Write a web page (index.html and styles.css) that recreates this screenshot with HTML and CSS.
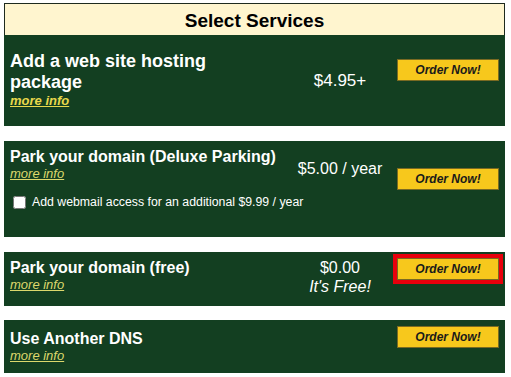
FILE: index.html
```html
<!DOCTYPE html>
<html lang="en">
<head>
    <meta charset="UTF-8">
    <title>Select Services</title>
    <link rel="stylesheet" href="styles.css">
</head>
<body>

<div class="services">
    <div class="services-head">Select Services</div>

    <div class="service service-hosting">
        <div class="service-info">
            <div class="service-name">Add a web site hosting package</div>
            <a href="#" class="more-info">more info</a>
        </div>
        <div class="service-price">$4.95+</div>
        <div class="service-order"><button type="button" class="order-btn">Order Now!</button></div>
    </div>

    <div class="service service-deluxe">
        <div class="service-info">
            <div class="service-name">Park your domain (Deluxe Parking)</div>
            <a href="#" class="more-info">more info</a>
        </div>
        <div class="service-price">$5.00 / year</div>
        <div class="service-order"><button type="button" class="order-btn">Order Now!</button></div>
        <label class="service-extra">
            <input type="checkbox" name="webmail">
            Add webmail access for an additional $9.99 / year
        </label>
    </div>

    <div class="service service-free">
        <div class="service-info">
            <div class="service-name">Park your domain (free)</div>
            <a href="#" class="more-info">more info</a>
        </div>
        <div class="service-price">$0.00<br><em>It's Free!</em></div>
        <div class="service-order"><button type="button" class="order-btn selected">Order Now!</button></div>
    </div>

    <div class="service service-dns">
        <div class="service-info">
            <div class="service-name">Use Another DNS</div>
            <a href="#" class="more-info">more info</a>
        </div>
        <div class="service-price"></div>
        <div class="service-order"><button type="button" class="order-btn">Order Now!</button></div>
    </div>
</div>

</body>
</html>
```

FILE: styles.css
```css
body {
    margin: 0;
    padding: 3px 6px 0 4px;
    background-color: #fff;
    font-family: "Liberation Sans", Arial, sans-serif;
}
.services {
    width: 501px;
}
.services-head {
    height: 31px;
    line-height: 33px;
    border: 1px solid #1e2a1e;
    border-bottom: none;
    background-color: #fff5cf;
    text-align: center;
    font-size: 19px;
    font-weight: bold;
    color: #000;
}
.service {
    display: grid;
    grid-template-columns: 280px 100px 1fr;
    padding: 6px 6px 10px 6px;
    background-color: #133f21;
    color: #fff;
    margin-top: 15px;
}
.services-head + .service {
    margin-top: 0;
}
.service-info {
    align-self: start;
}
.service-name {
    font-size: 16px;
    font-weight: bold;
    line-height: 19px;
}
.more-info {
    display: block;
    font-size: 13px;
    line-height: 15px;
    font-style: italic;
    color: #ddd86c;
    width: max-content;
}
.service-price {
    align-self: center;
    text-align: center;
    font-size: 16px;
    line-height: 19px;
}
.service-order {
    padding-left: 7px;
    align-self: start;
}
.order-btn {
    display: block;
    width: 102px;
    height: 22px;
    padding: 0;
    border: 1px solid #7a6a22;
    background-color: #f7c81c;
    font-family: "Liberation Sans", Arial, sans-serif;
    font-size: 12px;
    font-weight: bold;
    font-style: italic;
    color: #1a1a1a;
    cursor: pointer;
}
.order-btn.selected {
    outline: 4px solid #e8000c;
}

/* hosting */
.service-hosting {
    padding-top: 16px;
    padding-bottom: 17px;
}
.service-hosting .service-info {
    align-self: center;
}
.service-hosting .service-name {
    font-size: 18px;
    line-height: 21px;
    width: 230px;
}
.service-hosting .more-info {
    font-weight: bold;
    line-height: 16px;
    color: #e8d84c;
}
.service-hosting .service-price {
    font-size: 17px;
}
.service-hosting .service-order {
    margin-top: 8px;
}

/* deluxe */
.service-deluxe {
    padding-bottom: 28px;
}
.service-deluxe .service-order {
    margin-top: 21px;
}
.service-extra {
    grid-column: 1 / -1;
    display: flex;
    align-items: center;
    gap: 6px;
    margin-top: 6px;
    padding-left: 3px;
    font-size: 12.3px;
    line-height: 13px;
}
.service-extra input {
    width: 13px;
    height: 13px;
    margin: 0;
}

/* dns */
.service-dns {
    margin-top: 14px;
}
.service-dns .service-info {
    margin-top: 3px;
}
```
